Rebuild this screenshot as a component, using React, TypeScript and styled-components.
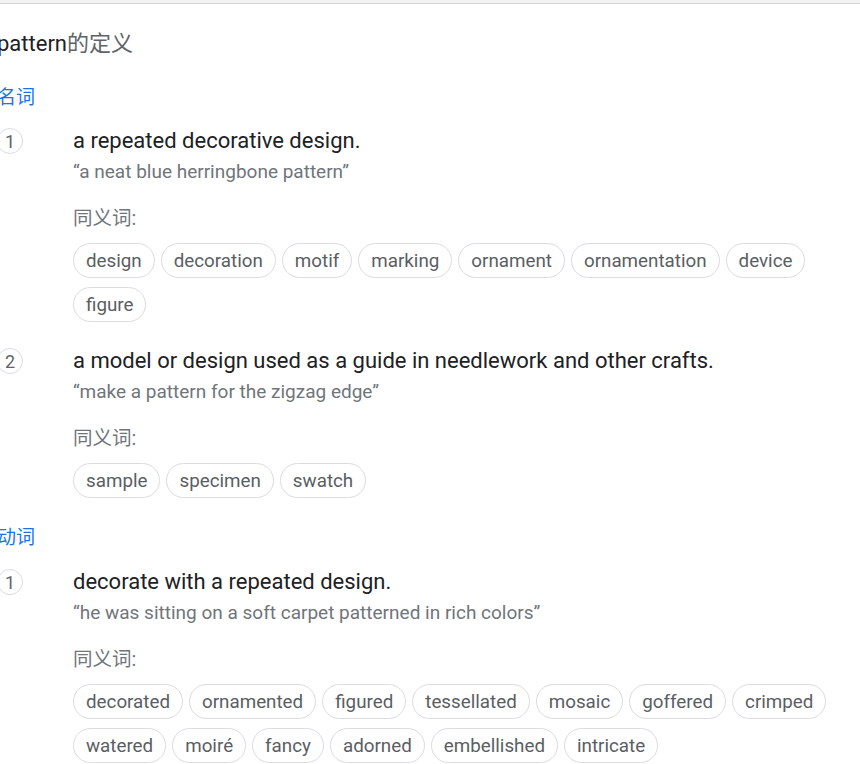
import React from "react";
import styled, { createGlobalStyle } from "styled-components";

const GlobalStyle = createGlobalStyle`
  html, body { margin: 0; padding: 0; background: #ffffff; }
  body { font-family: Roboto, "Noto Sans CJK SC", "Liberation Sans", sans-serif; overflow: hidden; }
`;

const TopBar = styled.div`
  height: 3px;
  background: #f2f2f2;
  border-bottom: 1px solid #d4d4d4;
`;

const Page = styled.div`
  margin-left: -3px;
  display: flex;
  flex-direction: column;
`;

const Heading = styled.h1`
  margin: 26px 0 0 0;
  font-size: 22px;
  line-height: 28px;
  font-weight: 400;
  color: #5f6368;
`;

const Word = styled.span`
  color: #202124;
`;

const PartOfSpeech = styled.div<{ $gap: number }>`
  margin-top: ${(p) => p.$gap}px;
  font-size: 19px;
  line-height: 24px;
  color: #1a73e8;
`;

const Sense = styled.div<{ $gap: number }>`
  margin-top: ${(p) => p.$gap}px;
  display: grid;
  grid-template-columns: 76px 1fr;
`;

const Num = styled.div`
  width: 24px;
  height: 24px;
  margin-top: 1px;
  border: 1px solid #dadce0;
  border-radius: 50%;
  display: flex;
  align-items: center;
  justify-content: center;
  font-size: 18px;
  color: #5f6368;
`;

const Body = styled.div`
  display: flex;
  flex-direction: column;
`;

const Definition = styled.div`
  font-size: 22px;
  line-height: 28px;
  color: #202124;
`;

const Example = styled.div`
  margin-top: 5px;
  font-size: 19px;
  line-height: 24px;
  color: #70757a;
`;

const SynLabel = styled.div`
  margin-top: 23px;
  font-size: 19.5px;
  line-height: 24px;
  color: #70757a;
`;

const Chips = styled.div`
  margin-top: 12px;
  display: flex;
  flex-wrap: wrap;
  gap: 9px 6px;
`;

const Chip = styled.span`
  box-sizing: border-box;
  height: 35px;
  padding: 0 12px;
  border: 1px solid #dadce0;
  border-radius: 18px;
  display: inline-flex;
  align-items: center;
  font-size: 18.8px;
  color: #5a5e63;
  white-space: nowrap;
`;

type SenseData = { def: string; ex: string; syn: string[] };

const nouns: SenseData[] = [
  {
    def: "a repeated decorative design.",
    ex: "\u201ca neat blue herringbone pattern\u201d",
    syn: ["design", "decoration", "motif", "marking", "ornament", "ornamentation", "device", "figure"],
  },
  {
    def: "a model or design used as a guide in needlework and other crafts.",
    ex: "\u201cmake a pattern for the zigzag edge\u201d",
    syn: ["sample", "specimen", "swatch"],
  },
];

const verbs: SenseData[] = [
  {
    def: "decorate with a repeated design.",
    ex: "\u201che was sitting on a soft carpet patterned in rich colors\u201d",
    syn: [
      "decorated",
      "ornamented",
      "figured",
      "tessellated",
      "mosaic",
      "goffered",
      "crimped",
      "watered",
      "moir\u00e9",
      "fancy",
      "adorned",
      "embellished",
      "intricate",
    ],
  },
];

function SenseBlock({ s, n, gap }: { s: SenseData; n: number; gap: number }) {
  return (
    <Sense $gap={gap}>
      <Num>{n}</Num>
      <Body>
        <Definition>{s.def}</Definition>
        <Example>{s.ex}</Example>
        <SynLabel>同义词:</SynLabel>
        <Chips>
          {s.syn.map((w) => (
            <Chip key={w}>{w}</Chip>
          ))}
        </Chips>
      </Body>
    </Sense>
  );
}

export default function App() {
  return (
    <>
      <GlobalStyle />
      <TopBar />
      <Page>
        <Heading>
          <Word>pattern</Word>的定义
        </Heading>
        <PartOfSpeech $gap={28}>名词</PartOfSpeech>
        {nouns.map((s, i) => (
          <SenseBlock key={i} s={s} n={i + 1} gap={i === 0 ? 17 : 25} />
        ))}
        <PartOfSpeech $gap={28}>动词</PartOfSpeech>
        {verbs.map((s, i) => (
          <SenseBlock key={i} s={s} n={i + 1} gap={18} />
        ))}
      </Page>
    </>
  );
}
